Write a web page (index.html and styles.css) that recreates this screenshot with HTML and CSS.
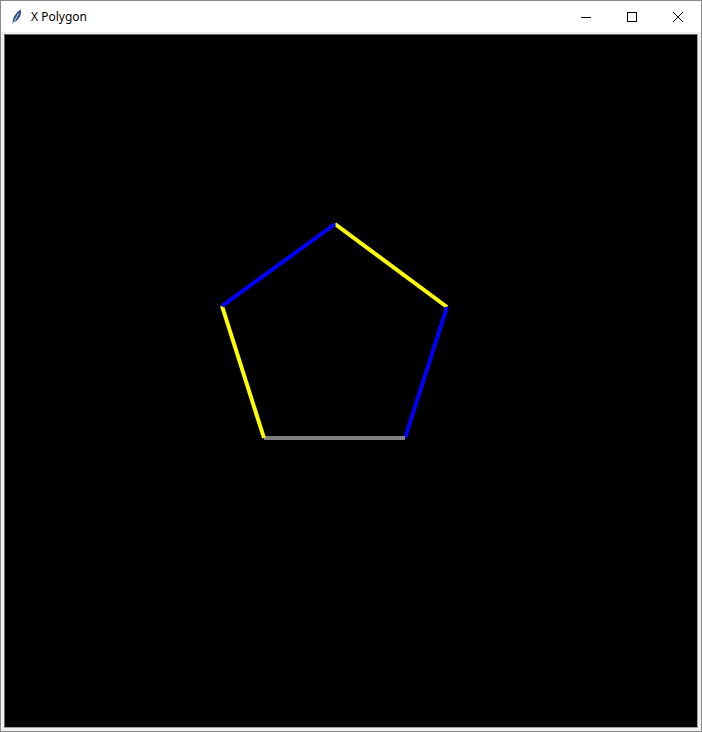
FILE: index.html
```html
<!DOCTYPE html>
<html>
<head>
<meta charset="utf-8">
<link rel="stylesheet" href="styles.css">
</head>
<body>
<div class="window">
  <div class="titlebar">
    <svg class="app-icon" width="16" height="16" viewBox="0 0 16 16">
      <path d="M3.5 15 C3.5 9.5 6 4 11.5 0.5 C13 2.5 11.5 8 8.5 11 C7.3 12.2 6 13 4.8 13.2 Z" fill="#2f4f86"/>
      <path d="M4 15 L9.5 4.5" stroke="#d6e0ef" stroke-width="0.9" fill="none"/>
    </svg>
    <span class="title">X Polygon</span>
    <div class="controls">
      <div class="ctl"><svg width="10" height="10" viewBox="0 0 10 10"><path d="M0 5.5 H10" stroke="#000" stroke-width="1"/></svg></div>
      <div class="ctl"><svg width="10" height="10" viewBox="0 0 10 10"><rect x="0.5" y="0.5" width="9" height="9" fill="none" stroke="#000" stroke-width="1"/></svg></div>
      <div class="ctl"><svg width="10" height="10" viewBox="0 0 10 10"><path d="M0 0 L10 10 M10 0 L0 10" stroke="#000" stroke-width="1"/></svg></div>
    </div>
  </div>
  <div class="client">
    <svg class="canvas" width="692" height="692" viewBox="0 0 692 692">
      <line x1="330" y1="189" x2="442" y2="272" stroke="#ffff00" stroke-width="4"/>
      <line x1="442" y1="272" x2="400" y2="403" stroke="#0000ff" stroke-width="4"/>
      <line x1="400" y1="403" x2="259" y2="403" stroke="#808080" stroke-width="4"/>
      <line x1="259" y1="403" x2="217" y2="271" stroke="#ffff00" stroke-width="4"/>
      <line x1="217" y1="271" x2="330" y2="189" stroke="#0000ff" stroke-width="4"/>
    </svg>
  </div>
</div>
</body>
</html>
```
FILE: styles.css
```css
html, body {
  margin: 0;
  padding: 0;
  background: #ffffff;
  overflow: hidden;
}
.window {
  width: 702px;
  height: 732px;
  box-sizing: border-box;
  border: 1px solid #8a8a8a;
  display: flex;
  flex-direction: column;
  background: #f0f0f0;
}
.titlebar {
  height: 31px;
  flex: 0 0 31px;
  background: #ffffff;
  display: flex;
  align-items: center;
  font-family: "Segoe UI", "Noto Sans", "Liberation Sans", sans-serif;
  font-size: 12px;
  color: #000;
}
.app-icon {
  margin-left: 8px;
  margin-right: 6px;
}
.title {
  flex: 1;
}
.controls {
  display: flex;
  height: 100%;
}
.ctl {
  width: 46px;
  height: 100%;
  display: flex;
  align-items: center;
  justify-content: center;
}
.client {
  flex: 1;
  padding: 2px 3px 2px 3px;
  display: flex;
}
.canvas {
  display: block;
  background: #000000;
  border: 1px solid #a0a0a0;
  border-top-color: #696969;
  border-left-color: #696969;
}
```
